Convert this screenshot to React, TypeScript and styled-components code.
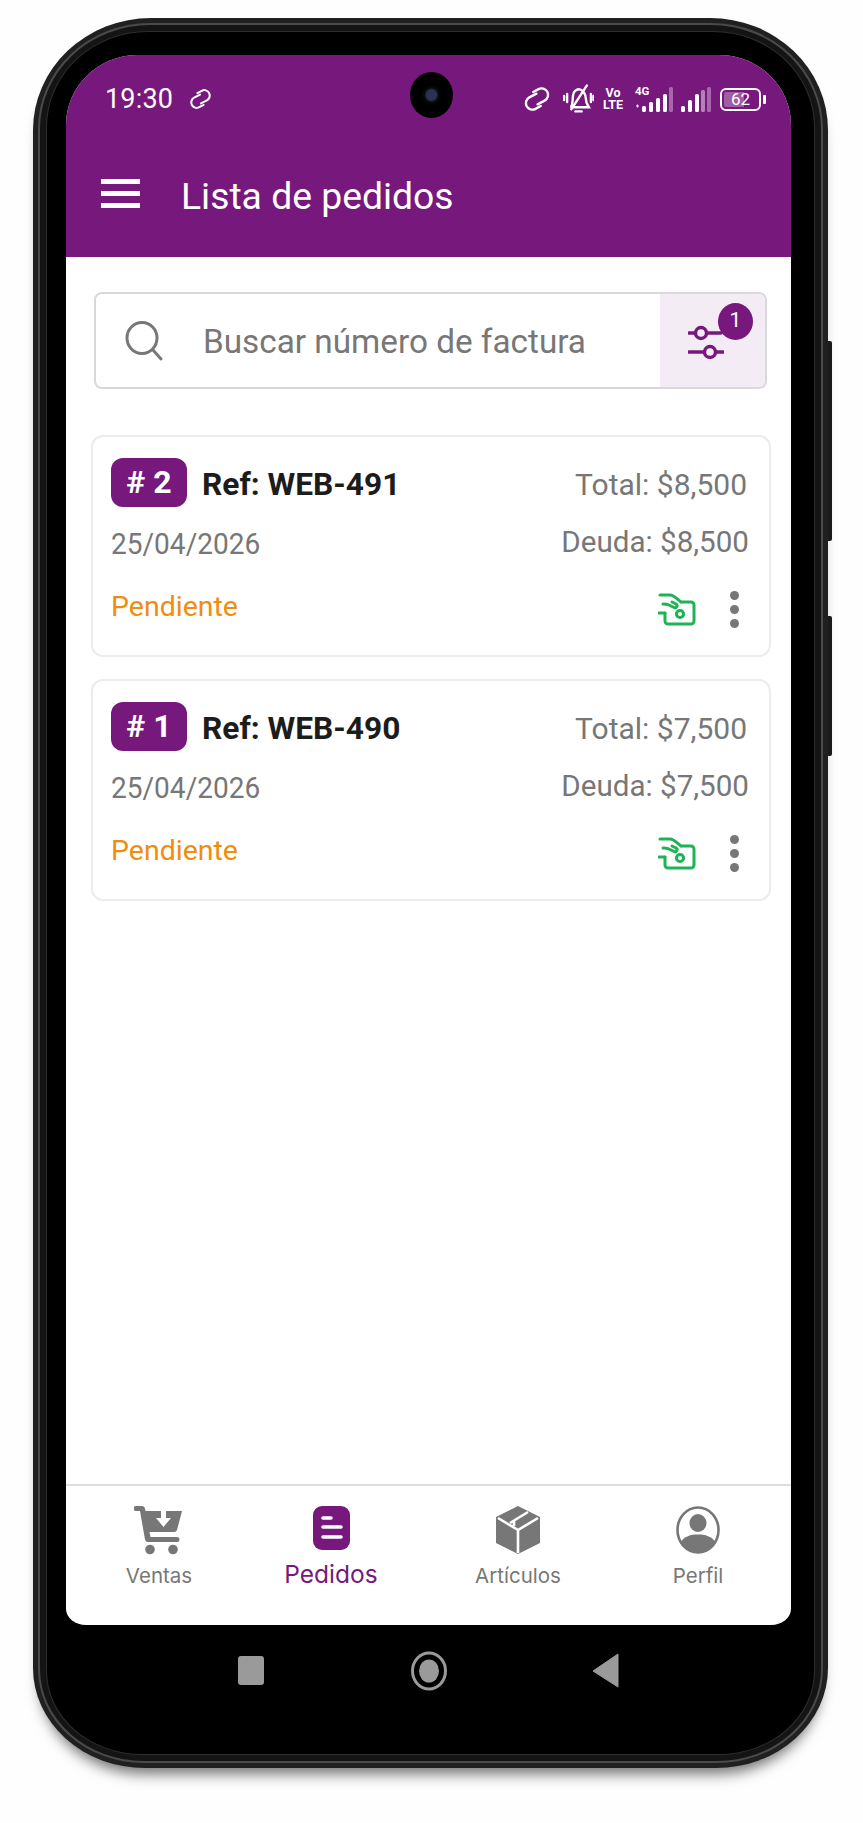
import React from "react";
import styled, { createGlobalStyle } from "styled-components";

const PURPLE = "#76187c";
const GRAY = "#777777";

const Global = createGlobalStyle`
  html, body { margin: 0; padding: 0; background: #fefefe; }
  body { font-family: Roboto, "Liberation Sans", sans-serif; }
  * { box-sizing: border-box; }
`;

const Page = styled.div`
  width: 863px;
  height: 1823px;
  padding: 18px 33px 0;
  overflow: hidden;
`;

const Phone = styled.div`
  position: relative;
  width: 795px;
  height: 1750px;
  padding: 5px;
  border-radius: 118px 118px 112px 112px / 112px 112px 100px 100px;
  background: #202020;
  box-shadow: 0 13px 14px -7px rgba(0, 0, 0, 0.55);
`;

const FrameLine = styled.div`
  height: 100%;
  padding: 6px;
  border-radius: 112px 112px 106px 106px / 106px 106px 94px 94px;
  background: #141414;
  border: 2px solid #4a4a4a;
`;

const Bezel = styled.div`
  display: flex;
  flex-direction: column;
  height: 100%;
  padding: 23px 23px 0 19px;
  border-radius: 102px 102px 96px 96px / 96px 96px 84px 84px;
  background: #000000;
  border: 1px solid #2e2e2e;
`;

const SideKey = styled.div<{ $top: number; $h: number }>`
  position: absolute;
  right: -4px;
  top: ${(p) => p.$top}px;
  width: 4px;
  height: ${(p) => p.$h}px;
  background: #1a1a1a;
  border-radius: 0 2px 2px 0;
`;

const Screen = styled.div`
  display: flex;
  flex-direction: column;
  width: 725px;
  height: 1570px;
  flex: none;
  background: #ffffff;
  border-radius: 72px 72px 20px 20px / 70px 70px 16px 16px;
  overflow: hidden;
`;

const Header = styled.header`
  height: 202px;
  flex: none;
  background: ${PURPLE};
  color: #ffffff;
  display: flex;
  flex-direction: column;
`;

const StatusBar = styled.div`
  position: relative;
  height: 82px;
  padding: 25px 30px 0 39px;
  display: flex;
  align-items: flex-start;
`;

const Clock = styled.span`
  font-size: 27px;
  line-height: 38px;
  letter-spacing: 0.2px;
`;

const SmallLink = styled.svg`
  margin: 7px 0 0 15px;
  flex: none;
`;

const Camera = styled.div`
  position: absolute;
  left: 344px;
  top: 17px;
  width: 43px;
  height: 46px;
  border-radius: 50%;
  background: radial-gradient(circle at 50% 50%, #2a3350 0 5px, #0a0a12 7px, #000 10px);
`;

const StatusRight = styled.div`
  margin-left: auto;
  display: flex;
  align-items: center;
  height: 28px;
  margin-top: 5px;
`;

const StatusIcon = styled.svg<{ $gap?: number }>`
  flex: none;
  margin-left: ${(p) => p.$gap ?? 0}px;
`;

const VoLte = styled.div`
  margin-left: 7px;
  width: 24px;
  font-size: 12.5px;
  font-weight: 700;
  line-height: 12px;
  text-align: center;
`;

const NetWrap = styled.div`
  position: relative;
  margin-left: 9px;
  width: 40px;
  height: 26px;
`;

const FourG = styled.span`
  position: absolute;
  left: 1px;
  top: -2px;
  font-size: 11.5px;
  font-weight: 700;
`;

const NetSvg = styled.svg`
  position: absolute;
  left: 0;
  top: 0;
`;

const Battery = styled.div`
  margin-left: 9px;
  width: 41px;
  height: 23px;
  border: 2px solid #fff;
  border-radius: 6px;
  padding: 2px;
  display: flex;
  position: relative;
  font-size: 17px;
  line-height: 15px;
  justify-content: center;
  background: linear-gradient(90deg, rgba(255,255,255,.3) 0 60%, transparent 60%) content-box;
  &::after {
    content: "";
    position: absolute;
    right: -7px;
    top: 5px;
    width: 3px;
    height: 9px;
    background: #fff;
    border-radius: 1px;
  }
`;

const AppBar = styled.div`
  flex: 1;
  display: flex;
  align-items: center;
  padding: 0 0 8px 35px;
`;

const Burger = styled.div`
  display: flex;
  flex-direction: column;
  gap: 7px;
  width: 39px;
  span {
    display: block;
    height: 5px;
    background: #fff;
  }
`;

const Title = styled.h1`
  margin: 6px 0 0 41px;
  font-size: 37.3px;
  font-weight: 400;
  line-height: 44px;
`;

const Content = styled.main`
  flex: 1;
  display: flex;
  flex-direction: column;
  padding: 35px 20px 0 25px;
`;

const SearchBox = styled.div`
  margin: 0 4px 0 3px;
  height: 97px;
  display: flex;
  border: 2px solid #d9d9d9;
  border-radius: 8px;
  overflow: hidden;
  flex: none;
`;

const SearchField = styled.div`
  flex: 1;
  display: flex;
  align-items: center;
  padding-left: 29px;
`;

const Placeholder = styled.span`
  margin: 2px 0 0 40px;
  font-size: 33.3px;
  color: ${GRAY};
`;

const FilterPane = styled.div`
  position: relative;
  width: 105px;
  background: #f3ecf5;
`;

const FilterIcon = styled.svg`
  position: absolute;
  left: 28px;
  top: 31px;
`;

const FilterCount = styled.span`
  position: absolute;
  left: 58px;
  top: 9px;
  width: 35px;
  height: 37px;
  border-radius: 50%;
  background: ${PURPLE};
  color: #fff;
  font-size: 21px;
  line-height: 35px;
  text-align: center;
`;

const Cards = styled.div`
  margin-top: 46px;
  display: flex;
  flex-direction: column;
  gap: 22px;
`;

const Card = styled.article`
  height: 222px;
  padding: 21px 22px 0 18px;
  background: #fff;
  border: 2px solid #ececec;
  border-radius: 12px;
  display: flex;
  flex-direction: column;
`;

const Row = styled.div<{ $mt?: number; $h: number }>`
  display: flex;
  align-items: center;
  justify-content: space-between;
  height: ${(p) => p.$h}px;
  margin-top: ${(p) => p.$mt ?? 0}px;
`;

const Left = styled.div`
  display: flex;
  align-items: center;
`;

const Badge = styled.span`
  width: 76px;
  height: 49px;
  border-radius: 12px;
  background: ${PURPLE};
  color: #fff;
  font-size: 32px;
  font-weight: 700;
  line-height: 49px;
  text-align: center;
`;

const Ref = styled.span`
  margin: 3px 0 0 15px;
  font-size: 31.7px;
  font-weight: 700;
  color: #1c1c1c;
`;

const TotalText = styled.span`
  font-size: 30px;
  color: ${GRAY};
  margin-top: 3px;
`;

const DebtText = styled.span`
  font-size: 29.6px;
  color: ${GRAY};
  margin: -2px -2px 0 0;
`;

const DateText = styled.span`
  font-size: 30px;
  color: ${GRAY};
  transform: scaleX(0.935);
  transform-origin: left center;
`;

const Pending = styled.span`
  font-size: 28.5px;
  color: #f28c0f;
  margin-top: -5px;
`;

const Actions = styled.div`
  display: flex;
  align-items: center;
  gap: 34px;
  padding-right: 8px;
  margin-top: 1px;
`;

const Dots = styled.div`
  display: flex;
  flex-direction: column;
  gap: 5px;
  i {
    display: block;
    width: 9px;
    height: 9px;
    border-radius: 50%;
    background: ${GRAY};
  }
`;

const BottomNav = styled.nav`
  flex: none;
  height: 141px;
  border-top: 2px solid #dddddd;
  display: grid;
  grid-template-columns: 186px 158px 216px 144px;
  padding-right: 21px;
`;

const NavItem = styled.div<{ $active?: boolean }>`
  display: flex;
  flex-direction: column;
  align-items: center;
  padding-top: 20px;
  color: ${(p) => (p.$active ? PURPLE : GRAY)};
  font-family: Inter, "Noto Sans", sans-serif;
  font-size: ${(p) => (p.$active ? 24.5 : 20.5)}px;
`;

const NavIconSlot = styled.div`
  height: 49px;
  display: flex;
  align-items: flex-start;
  justify-content: center;
`;

const NavLabel = styled.span<{ $active?: boolean }>`
  margin-top: ${(p) => (p.$active ? 5 : 7)}px;
  line-height: 28px;
  white-space: nowrap;
`;

const Chin = styled.div`
  flex: 1;
  display: flex;
  align-items: flex-start;
  padding: 26px 0 0 172px;
`;

const SoftKeys = styled.svg`
  display: block;
`;

const LinkGlyph = ({ size }: { size: number }) => (
  <g fill="none" stroke="#fff" strokeWidth={size} strokeLinecap="round" transform="rotate(-28 15 12)">
    <path d="M17 7 H9 a6.5 6.5 0 0 0 0 13 h6" />
    <path d="M13 17 H21 a6.5 6.5 0 0 0 0 -13 h-6" />
  </g>
);

const MoneyIcon = () => (
  <svg width="38" height="33" viewBox="0 0 38 33" fill="none" stroke="#1fb355" strokeWidth="3" strokeLinecap="round" strokeLinejoin="round">
    <path d="M7 20 V28 a3 3 0 0 0 3 3 H33 a3 3 0 0 0 3 -3 V12 a3 3 0 0 0 -3 -3 H24" />
    <path d="M2 2 H12 C16 2 19 6 23 9" />
    <path d="M14 9 L18 11 a1.8 1.8 0 0 1 -2 3.5 L11 12 C9 11 7 11 5 11" />
    <path d="M1 20 H7" />
    <circle cx="22" cy="21" r="3.6" />
  </svg>
);

const orders = [
  { n: 2, ref: "WEB-491", amount: "$8,500" },
  { n: 1, ref: "WEB-490", amount: "$7,500" },
];

export default function App() {
  return (
    <Page>
      <Global />
      <Phone>
        <SideKey $top={323} $h={200} />
        <SideKey $top={598} $h={140} />
        <FrameLine>
          <Bezel>
            <Screen>
              <Header>
                <StatusBar>
                  <Clock>19:30</Clock>
                  <SmallLink width="25" height="24" viewBox="0 -2 30 28">
                    <LinkGlyph size={2.4} />
                  </SmallLink>
                  <Camera />
                  <StatusRight>
                    <StatusIcon width="34" height="28" viewBox="0 -2 30 28">
                      <LinkGlyph size={2.4} />
                    </StatusIcon>
                    <StatusIcon $gap={9} width="31" height="30" viewBox="0 0 30 28" fill="none" stroke="#fff" strokeWidth="2.3" strokeLinecap="round">
                      <path d="M8 21 C10 18 9 12 10 9 C11 5 15 4 17 5 C20 6 22 10 22 13 C22 16 23 19 25 22 H8" />
                      <path d="M12 26 H18" />
                      <path d="M23 1 L8 24" />
                      <path d="M4 9 V17 M1 11 V15 M27 9 V17 M29.5 11 V15" />
                    </StatusIcon>
                    <VoLte>
                      Vo
                      <br />
                      LTE
                    </VoLte>
                    <NetWrap>
                      <FourG>4G</FourG>
                      <NetSvg width="40" height="26" viewBox="0 0 40 26" fill="#fff">
                        <path d="M2 20 H5 M3.5 18.5 V21.5" stroke="#fff" strokeWidth="1" />
                        <rect x="8" y="20" width="4" height="6" rx="1.5" />
                        <rect x="15" y="16" width="4" height="10" rx="1.5" />
                        <rect x="22" y="12" width="4" height="14" rx="1.5" />
                        <rect x="29" y="8" width="4" height="18" rx="1.5" />
                        <rect x="35" y="1" width="4" height="25" rx="1.5" opacity="0.35" />
                      </NetSvg>
                    </NetWrap>
                    <StatusIcon $gap={7} width="30" height="26" viewBox="0 0 30 26" fill="#fff">
                      <rect x="0" y="20" width="4" height="6" rx="1.5" />
                      <rect x="7" y="14" width="4" height="12" rx="1.5" />
                      <rect x="14" y="8" width="4" height="18" rx="1.5" />
                      <rect x="20" y="4" width="4" height="22" rx="1.5" opacity="0.45" />
                      <rect x="26" y="1" width="4" height="25" rx="1.5" opacity="0.35" />
                    </StatusIcon>
                    <Battery>62</Battery>
                  </StatusRight>
                </StatusBar>
                <AppBar>
                  <Burger>
                    <span />
                    <span />
                    <span />
                  </Burger>
                  <Title>Lista de pedidos</Title>
                </AppBar>
              </Header>
              <Content>
                <SearchBox>
                  <SearchField>
                    <svg width="38" height="40" viewBox="0 0 38 40" fill="none" stroke={GRAY} strokeWidth="3" strokeLinecap="round">
                      <ellipse cx="17" cy="17" rx="15" ry="15.5" />
                      <path d="M28 29 L36 38" />
                    </svg>
                    <Placeholder>Buscar número de factura</Placeholder>
                  </SearchField>
                  <FilterPane>
                    <FilterIcon width="36" height="36" viewBox="0 0 36 36" fill="none" stroke={PURPLE} strokeWidth="3.4" strokeLinecap="round">
                      <circle cx="13" cy="8" r="5.5" />
                      <path d="M1 8 H7 M19 8 H33" />
                      <circle cx="22" cy="27" r="5.5" />
                      <path d="M1 27 H16 M28 27 H35" />
                    </FilterIcon>
                    <FilterCount>1</FilterCount>
                  </FilterPane>
                </SearchBox>
                <Cards>
                  {orders.map((o) => (
                    <Card key={o.n}>
                      <Row $h={49}>
                        <Left>
                          <Badge># {o.n}</Badge>
                          <Ref>Ref: {o.ref}</Ref>
                        </Left>
                        <TotalText>Total: {o.amount}</TotalText>
                      </Row>
                      <Row $h={36} $mt={18}>
                        <DateText>25/04/2026</DateText>
                        <DebtText>Deuda: {o.amount}</DebtText>
                      </Row>
                      <Row $h={36} $mt={30}>
                        <Pending>Pendiente</Pending>
                        <Actions>
                          <MoneyIcon />
                          <Dots>
                            <i />
                            <i />
                            <i />
                          </Dots>
                        </Actions>
                      </Row>
                    </Card>
                  ))}
                </Cards>
              </Content>
              <BottomNav>
                <NavItem>
                  <NavIconSlot>
                    <svg width="50" height="49" viewBox="0 0 50 49" fill={GRAY}>
                      <path d="M2 0 H8 a3 3 0 0 1 3 2.5 L11.5 5 H48 L43 24 a3 3 0 0 1 -3 2 H15.5 L16.5 31 H43 a2.5 2.5 0 0 1 0 5 H14 a3 3 0 0 1 -3 -2.5 L6 5 H2 a2.5 2.5 0 0 1 0 -5 Z" />
                      <path d="M27 4 H32 V12 H37 L29.5 21 L22 12 H27 Z" fill="#fff" />
                      <circle cx="16" cy="43.5" r="4.8" />
                      <circle cx="39" cy="43.5" r="4.8" />
                    </svg>
                  </NavIconSlot>
                  <NavLabel>Ventas</NavLabel>
                </NavItem>
                <NavItem $active>
                  <NavIconSlot>
                    <svg width="37" height="44" viewBox="0 0 37 44">
                      <rect width="37" height="44" rx="9" fill={PURPLE} />
                      <path d="M10 12 H18 M10 21 H28 M10 31 H28" stroke="#fff" strokeWidth="3.6" strokeLinecap="round" />
                    </svg>
                  </NavIconSlot>
                  <NavLabel $active>Pedidos</NavLabel>
                </NavItem>
                <NavItem>
                  <NavIconSlot>
                    <svg width="44" height="48" viewBox="0 0 44 48">
                      <path d="M22 0 L44 11 V37 L22 48 L0 37 V11 Z" fill={GRAY} />
                      <path d="M2 12 L22 24 L42 12 M22 24 V47 M14 17 L32 6 M18 20 V14" fill="none" stroke="#fff" strokeWidth="2.6" />
                    </svg>
                  </NavIconSlot>
                  <NavLabel>Artículos</NavLabel>
                </NavItem>
                <NavItem>
                  <NavIconSlot>
                    <svg width="44" height="48" viewBox="0 0 44 48">
                      <ellipse cx="22" cy="24" rx="20.5" ry="22.5" fill="none" stroke={GRAY} strokeWidth="2.6" />
                      <ellipse cx="22" cy="17" rx="8.5" ry="9" fill={GRAY} />
                      <path d="M4 37 C8 30 15 28.5 22 28.5 C29 28.5 36 30 40 37 C36 43 29 46.5 22 46.5 C15 46.5 8 43 4 37 Z" fill={GRAY} />
                    </svg>
                  </NavIconSlot>
                  <NavLabel>Perfil</NavLabel>
                </NavItem>
              </BottomNav>
            </Screen>
            <Chin>
              <SoftKeys width="382" height="40" viewBox="0 0 382 40">
                <rect x="0" y="5" width="26" height="29" rx="3" fill="#9a9a9a" />
                <ellipse cx="191" cy="20" rx="16.5" ry="18" fill="none" stroke="#9a9a9a" strokeWidth="3" />
                <ellipse cx="191" cy="20" rx="10" ry="11.5" fill="#9a9a9a" />
                <path d="M355 20 L380 3 V36 Z" fill="#9a9a9a" strokeLinejoin="round" stroke="#9a9a9a" strokeWidth="1" />
              </SoftKeys>
            </Chin>
          </Bezel>
        </FrameLine>
      </Phone>
    </Page>
  );
}
